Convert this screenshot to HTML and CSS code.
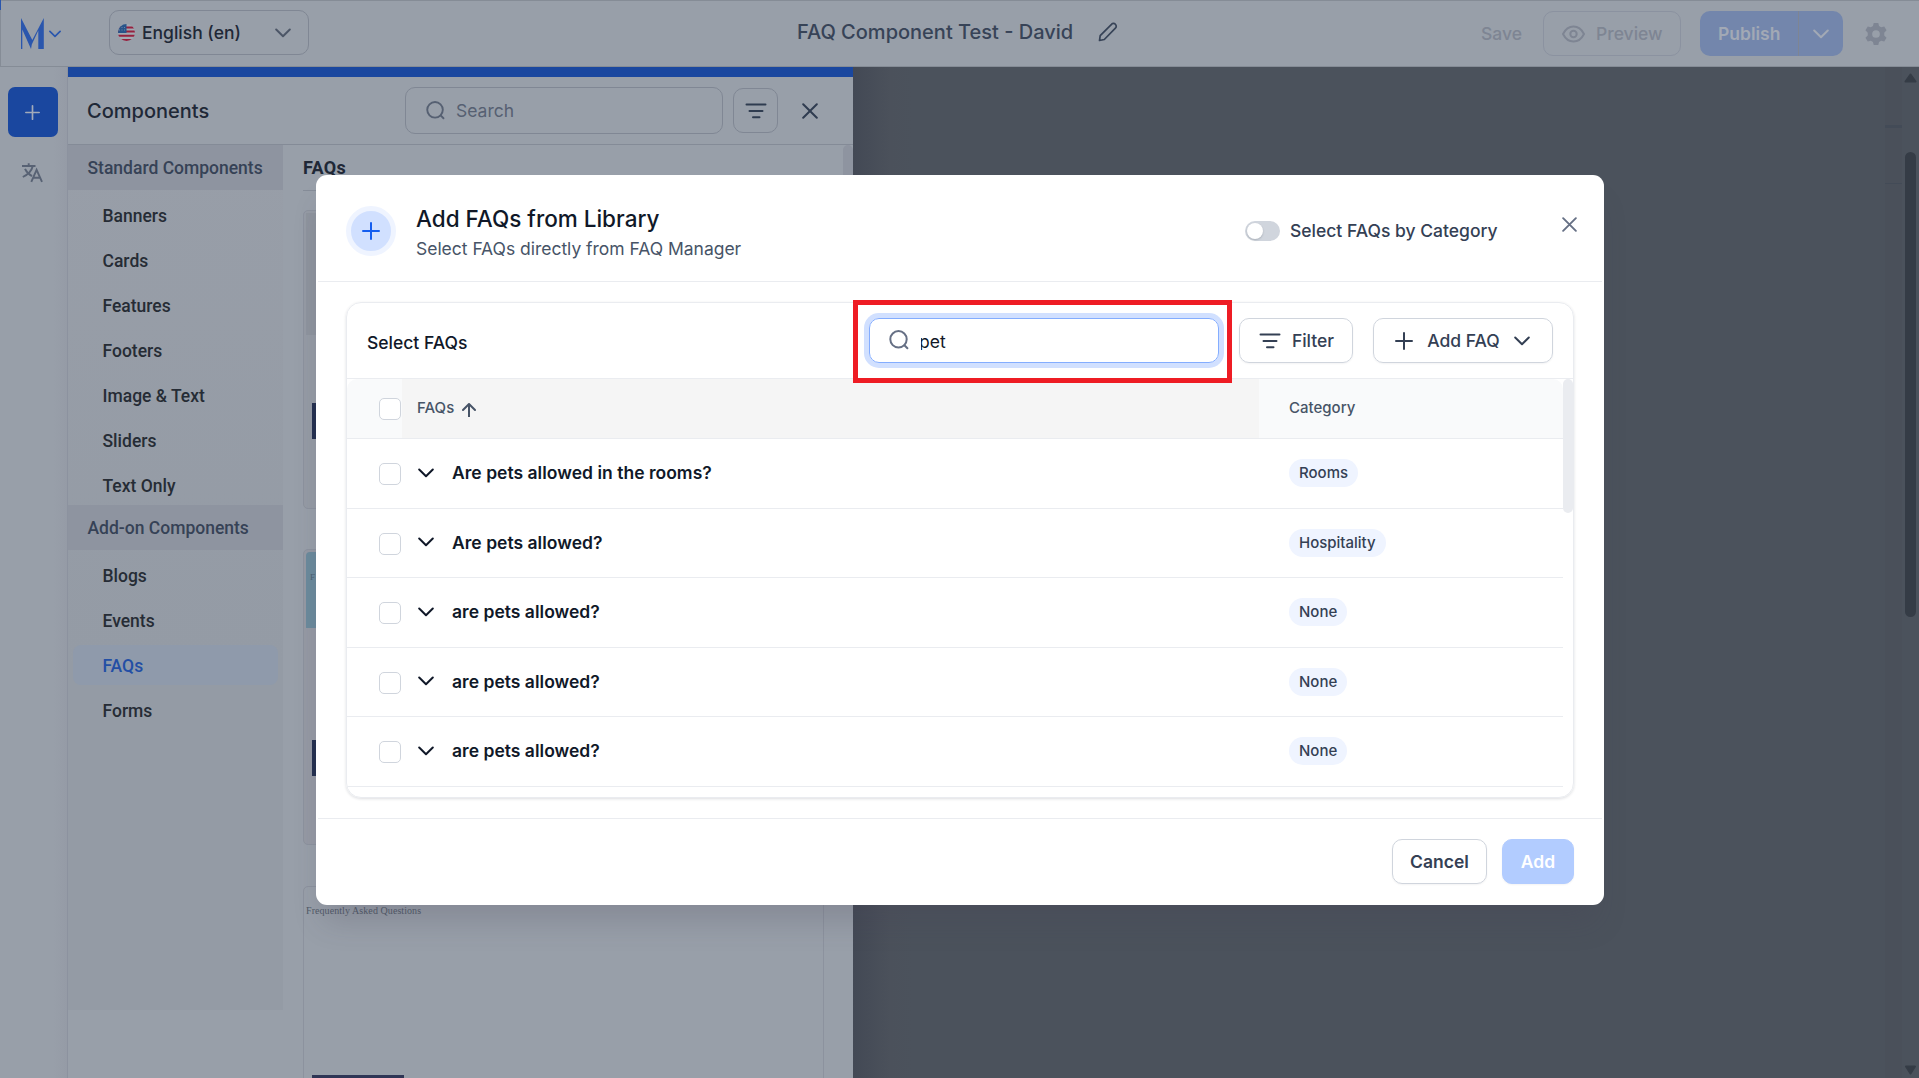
FILE: index.html
```html
<!DOCTYPE html>
<html lang="en">
<head>
<meta charset="utf-8">
<title>FAQ Component Test - David</title>
<link rel="stylesheet" href="styles.css">
</head>
<body>
<svg class="defs" width="0" height="0">
  <symbol id="chevron" viewBox="0 0 16 10"><path d="M1.2 1.5 8 8.2l6.8-6.7"/></symbol>
  <symbol id="plus" viewBox="0 0 18 18"><path d="M9 1v16M1 9h16"/></symbol>
  <symbol id="search" viewBox="0 0 20 20"><circle cx="9.5" cy="9.3" r="8.2"/><path d="m15.4 15.2 3 3"/></symbol>
  <symbol id="lines" viewBox="0 0 22 16"><path d="M1.5 1.5h19M4.5 8h13M8 14.3h6.5"/></symbol>
  <symbol id="close" viewBox="0 0 16 16"><path d="m1.2 1.2 13.6 13.6M14.8 1.2 1.2 14.8"/></symbol>
</svg>
<div class="app">
  <header class="topbar">
    <div class="brand">
      <svg width="24" height="32" viewBox="0 0 24 32"><path fill="#2a56ad" d="M0 0 11.3 22 22.8 0V31H17.3V12.5L10.8 26.5 10 31 1.3 11.5V31H0Z"/></svg>
      <svg class="ic brand-chev" width="12" height="8"><use href="#chevron"/></svg>
    </div>
    <div class="lang">
      <svg width="17" height="17" viewBox="0 0 17 17">
        <clipPath id="flag"><circle cx="8.5" cy="8.5" r="8.5"/></clipPath>
        <g clip-path="url(#flag)"><rect width="17" height="17" fill="#a3a9b3"/><path stroke="#96213f" stroke-width="2" d="M0 3.5h17M0 7.5h17M0 11.7h17M0 16h17"/><rect width="8.5" height="9" fill="#27548a"/><path stroke="#7f93ae" stroke-width=".8" stroke-dasharray="1 1.5" d="M1 3.5h7M1 6h7"/></g>
      </svg>
      <span>English (en)</span>
      <svg class="ic" width="16" height="10"><use href="#chevron"/></svg>
    </div>
    <div class="doc-title"><span>FAQ Component Test - David</span>
      <svg class="ic" width="20" height="20" viewBox="0 0 20 20"><path d="M1.5 18.5 2.2 13.6 13.5 2.3a2.6 2.6 0 0 1 3.9 0 2.6 2.6 0 0 1 0 3.8L6.3 17.5Z"/></svg>
    </div>
    <div class="actions">
      <span class="save">Save</span>
      <div class="preview">
        <svg class="ic" width="23" height="18" viewBox="0 0 23 18"><path d="M1 9C3.500 4 7 1.500 11.500 1.500S19.500 4 22 9C19.500 14 16 16.500 11.500 16.500S3.500 14 1 9Z"/><circle cx="11.500" cy="9" r="3.200"/></svg>
        <span>Preview</span>
      </div>
      <div class="publish"><span class="pub-label">Publish</span><span class="pub-more"><svg class="ic" width="16" height="10"><use href="#chevron"/></svg></span></div>
      <svg class="gear" width="22" height="22" viewBox="0 0 24 24"><path fill-rule="evenodd" d="M9.500 0h5l.8 3.400 2.300 1.300 3.400-1 2.500 4.300-2.500 2.500v3l2.500 2.500-2.500 4.300-3.400-1-2.300 1.300-.8 3.400h-5l-.8-3.400-2.300-1.300-3.400 1L.5 16 3 13.500v-3L.5 8 3 3.700l3.400 1 2.300-1.300ZM12 7.800a4.200 4.200 0 1 0 0 8.400 4.200 4.200 0 0 0 0-8.400Z"/></svg>
    </div>
    <i class="corner"></i>
  </header>
  <div class="workspace">
    <nav class="rail">
      <div class="rail-add"><svg class="ic" width="15" height="15"><use href="#plus"/></svg></div>
      <svg class="translate" width="22" height="20" viewBox="0 0 22 20"><path d="M0 3h13.500M6.700.3V3M10.800 3C9.800 7.200 6 11.500.8 14M3 5.800c1.500 3.200 4 5.600 7 7.300M9.300 18.800 14.600 6.800 20 18.800M11 14.800h7.200"/></svg>
    </nav>
    <section class="panel">
      <div class="panel-head">
        <h2>Components</h2>
        <div class="panel-search"><svg class="ic" width="19" height="19"><use href="#search"/></svg><span>Search</span></div>
        <div class="panel-filter"><svg class="ic" width="22" height="16"><use href="#lines"/></svg></div>
        <svg class="ic panel-close" width="16" height="16"><use href="#close"/></svg>
      </div>
      <div class="panel-body">
        <div class="cats">
          <h3>Standard Components</h3>
          <a>Banners</a><a>Cards</a><a>Features</a><a>Footers</a><a>Image &amp; Text</a><a>Sliders</a><a>Text Only</a>
          <h3>Add-on Components</h3>
          <a>Blogs</a><a>Events</a><a class="on">FAQs</a><a>Forms</a>
        </div>
        <div class="previews">
          <h4>FAQs</h4>
          <div class="thumb t1"><div class="hero-grey"></div><div class="navy"></div></div>
          <div class="thumb t2"><div class="hero-blue">F</div><div class="navy"></div></div>
          <div class="thumb t3"><p>Frequently Asked Questions</p><div class="navy-bar"></div></div>
        </div>
        <div class="panel-scroll"></div>
      </div>
    </section>
    <main class="canvas">
      <div class="page-edge"></div>
      <div class="scroll">
        <svg width="13" height="10" viewBox="0 0 13 10"><path stroke-width="2" stroke-linejoin="round" d="M6.500 1.500 11.500 8.500h-10Z"/></svg>
        <i></i>
        <svg width="13" height="10" viewBox="0 0 13 10"><path stroke-width="2" stroke-linejoin="round" d="M6.500 8.500 11 1.500H2Z"/></svg>
      </div>
    </main>
  </div>
</div>

<div class="overlay">
  <div class="modal">
    <div class="modal-head">
      <div class="badge"><svg class="ic" width="18" height="18"><use href="#plus"/></svg></div>
      <div class="heading"><h1>Add FAQs from Library</h1><p>Select FAQs directly from FAQ Manager</p></div>
      <div class="toggle"><i></i></div>
      <span class="toggle-label">Select FAQs by Category</span>
      <svg class="ic modal-close" width="15" height="15" viewBox="0 0 16 16"><use href="#close"/></svg>
    </div>
    <div class="modal-body">
      <div class="card">
        <div class="toolbar">
          <span class="tool-title">Select FAQs</span>
          <div class="field"><svg class="ic" width="20" height="20"><use href="#search"/></svg><span>pet</span></div>
          <div class="btn filter"><svg class="ic" width="22" height="16"><use href="#lines"/></svg>Filter</div>
          <div class="btn addfaq"><svg class="ic" width="18" height="18"><use href="#plus"/></svg><span>Add FAQ</span><svg class="ic" width="16" height="10"><use href="#chevron"/></svg></div>
        </div>
        <div class="table-wrap">
          <div class="table">
            <div class="row head">
              <div class="c-check"><i class="box"></i></div>
              <div class="c-faq">FAQs <svg class="ic" width="14" height="14" viewBox="0 0 14 14"><path d="M7 13.500V1M1 7l6-6 6 6"/></svg></div>
              <div class="c-cat">Category</div>
            </div>
            <div class="row"><div class="c-check"><i class="box"></i></div><div class="c-faq"><svg class="ic" width="16" height="10"><use href="#chevron"/></svg>Are pets allowed in the rooms?</div><div class="c-cat"><span class="pill">Rooms</span></div></div>
            <div class="row"><div class="c-check"><i class="box"></i></div><div class="c-faq"><svg class="ic" width="16" height="10"><use href="#chevron"/></svg>Are pets allowed?</div><div class="c-cat"><span class="pill">Hospitality</span></div></div>
            <div class="row"><div class="c-check"><i class="box"></i></div><div class="c-faq"><svg class="ic" width="16" height="10"><use href="#chevron"/></svg>are pets allowed?</div><div class="c-cat"><span class="pill">None</span></div></div>
            <div class="row"><div class="c-check"><i class="box"></i></div><div class="c-faq"><svg class="ic" width="16" height="10"><use href="#chevron"/></svg>are pets allowed?</div><div class="c-cat"><span class="pill">None</span></div></div>
            <div class="row"><div class="c-check"><i class="box"></i></div><div class="c-faq"><svg class="ic" width="16" height="10"><use href="#chevron"/></svg>are pets allowed?</div><div class="c-cat"><span class="pill">None</span></div></div>
          </div>
          <div class="thumb-bar"></div>
        </div>
      </div>
    </div>
    <div class="modal-foot">
      <div class="btn cancel">Cancel</div>
      <div class="btn add">Add</div>
    </div>
    <div class="marker"></div>
  </div>
</div>
</body>
</html>
```
FILE: styles.css
```css
* { box-sizing: border-box; }
html, body { height: 100%; }
body {
  margin: 0;
  overflow: hidden;
  position: relative;
  font: 500 17.5px/1.2 Inter, sans-serif;
  color: #202837;
}
h1, h2, h3, h4, p { margin: 0; font-weight: 500; }
svg { flex: none; }
.defs { position: absolute; }
.ic { fill: none; stroke: currentColor; stroke-width: 2; stroke-linecap: round; stroke-linejoin: round; }

.app { height: 100%; display: flex; flex-direction: column; background: #989fa9; }

/* Top bar */
.topbar {
  position: relative;
  flex: none;
  height: 67px;
  display: flex;
  align-items: flex-start;
  border: solid #858c96;
  border-width: 1px 0 1px 1px;
}
.corner { position: absolute; left: -1px; top: -1px; width: 1px; height: 10px; background: #2a56ad; }
.brand { display: flex; width: 108px; padding: 17px 0 0 20px; color: #2a56ad; }
.brand-chev { margin: 12px 0 0 4px; stroke-width: 2.2; }
.lang {
  width: 200px;
  height: 45px;
  margin-top: 9px;
  padding: 0 17px 0 8px;
  display: flex;
  align-items: center;
  border: 1px solid #808794;
  border-radius: 10px;
}
.lang span { flex: 1; margin-left: 7px; }
.lang .ic { color: #4c5667; }
.doc-title { display: flex; align-items: center; margin: 19px 0 0 488px; height: 24px; font-size: 20px; color: #374357; }
.doc-title .ic { margin-left: 25px; stroke-width: 1.7; }
.actions { display: flex; align-items: center; margin: 10px 42px 0 auto; height: 45px; color: #7e8593; }
.save { margin-right: 21px; }
.preview { width: 138px; height: 45px; display: flex; align-items: center; padding-left: 18px; gap: 11px; border: 1px solid #8b92a0; border-radius: 10px; }
.publish { display: flex; width: 143px; height: 45px; margin-left: 19px; background: #7386ac; border-radius: 10px; color: #a2a9b5; font-weight: 600; }
.pub-label { width: 99px; padding: 12px 0 0 18px; border-right: 1px solid #7e8593; }
.pub-more { flex: 1; display: grid; place-items: center; }
.gear { margin-left: 22px; fill: #7e8593; margin-right: -10px; }

/* Workspace */
.workspace { flex: 1; min-height: 0; display: flex; }
.rail { width: 68px; border-right: 1px solid #8c929f; padding: 20px 0 0 8px; background: linear-gradient(90deg, #989fa9 80%, #959ba6); }
.rail-add { width: 50px; height: 50px; display: grid; place-items: center; padding-right: 2px; border-radius: 7px; background: #1a479f; color: #a2abba; }
.translate { display: block; margin: 26px 0 0 14px; fill: none; stroke: #586274; stroke-width: 1.9; }

.panel { width: 785px; display: flex; flex-direction: column; border-top: 10px solid #1a479f; }
.panel-head { flex: none; height: 68px; display: flex; align-items: center; padding-left: 19px; border-bottom: 1px solid #848b97; }
.panel-head h2 { width: 318px; font-size: 20px; }
.panel-search { width: 318px; height: 47px; display: flex; align-items: center; gap: 11px; padding-left: 20px; border: 1px solid #808794; border-radius: 10px; color: #566072; font-weight: 400; }
.panel-filter { width: 45px; height: 45px; margin-left: 10px; display: grid; place-items: center; border: 1px solid #808794; border-radius: 10px; color: #2f3c50; }
.panel-close { margin-left: 24px; color: #2f3c50; }
.panel-body { flex: 1; min-height: 0; display: flex; }

.cats { width: 215px; height: 865px; background: linear-gradient(#989ea8, #949ba5 60%); font-family: Roboto, sans-serif; color: #262c35; }
.cats h3 { height: 45px; padding-left: 19.500px; font-size: 17.500px; line-height: 47px; background: #8e94a0; color: #364256; }
.cats a { display: block; height: 40px; margin: 5px 5px 0; padding-left: 29.500px; line-height: 43px; border-radius: 8px; }
.cats .on { background: #8f9aab; color: #234fa5; }

.previews { width: 560px; padding: 0 19px 0 20px; overflow: hidden; }
.previews h4 { height: 46px; padding-top: 13px; border-bottom: 1px solid #858c98; font: 700 18px/20px Roboto, sans-serif; letter-spacing: .3px; }
.thumb { border: 1px solid #8c929e; border-radius: 5px; padding: 2px; }
.t1 { height: 299px; margin-top: 19px; background: #959ba5; }
.hero-grey { height: 122px; background: #8e949e; }
.navy { margin-left: 6px; width: 300px; height: 36px; background: #232f4f; }
.t1 .navy { margin-top: 68px; }
.t2 { height: 296px; margin-top: 40px; background: #9599a4; }
.hero-blue { height: 76px; padding: 18px 0 0 4px; border-radius: 4px 4px 0 0; background: #6b8a9c; font: 9px/14px "Liberation Serif", serif; color: #4c6173; }
.t2 .navy { margin-top: 112px; }
.t3 { height: 300px; margin-top: 41px; display: flex; flex-direction: column; }
.t3 p { margin-top: 15px; font: 10px/14px "Liberation Serif", serif; letter-spacing: .07px; color: #515a68; }
.navy-bar { margin: 157px 0 0 6px; width: 92px; height: 30px; background: #2e3555; }
.panel-scroll { width: 10px; height: 600px; border-radius: 5px; background: #8e94a0; }

.canvas { flex: 1; display: flex; background: linear-gradient(90deg, #434955, #4b515b 37px, #4b525c 60px); }
.page-edge { margin-left: 1032px; width: 17px; background: linear-gradient(transparent 58px, #434b57 58px 61px, transparent 61px 116px, #434b57 116px 117px, transparent 117px), #4a505a; }
.scroll { flex: 1; display: flex; flex-direction: column; align-items: center; padding: 6px 0 3px; }
.scroll svg { fill: #353c46; stroke: #353c46; }
.scroll i { width: 11px; height: 465px; margin: 69px 0 auto; border-radius: 6px; background: #353c46; }

/* Dialog */
.overlay { position: absolute; inset: 0; display: flex; align-items: center; justify-content: center; padding: 2px 0 0 1px; }
.modal {
  position: relative;
  width: 1288px;
  height: 730px;
  display: flex;
  flex-direction: column;
  border-radius: 11px;
  background: #fff;
  box-shadow: 0 24px 30px -8px rgba(67, 62, 80, .22);
  color: #344054;
}
.modal-head { flex: none; height: 107px; margin: 0 2px; display: flex; align-items: flex-start; border-bottom: 1px solid #eaecf0; }
.badge { flex: none; width: 50px; height: 50px; margin: 31px 0 0 28px; display: grid; place-items: center; border: 5px solid #eff4ff; border-radius: 50%; background: #d1e0ff; color: #155eef; }
.heading { flex: none; width: 849px; padding: 29px 0 0 20px; }
.heading h1 { font-size: 22.5px; line-height: 30px; color: #101828; }
.heading p { margin-top: 2px; font-weight: 400; line-height: 26px; letter-spacing: -.02px; color: #475467; }
.toggle { flex: none; width: 35px; height: 20px; margin-top: 46px; padding: 2px; border-radius: 10px; background: #d0d5dd; }
.toggle i { display: block; width: 16px; height: 16px; border-radius: 50%; background: #fff; box-shadow: 0 1px 2px rgba(16, 24, 40, .2); }
.toggle-label { flex: none; width: 262px; margin: 45px 0 0 10px; }
.modal-close { margin: 42px 0 0 10px; color: #667085; }
.modal-body { flex: 1; min-height: 0; padding: 20px 30px 20px; }
.card { height: 496px; display: flex; flex-direction: column; border: 1px solid #eaecf0; border-radius: 15px; box-shadow: 0 1px 3px rgba(16, 24, 40, .14); overflow: hidden; }
.toolbar { flex: none; height: 75px; display: flex; padding: 15px 0 0 20px; }
.tool-title { width: 502px; padding-top: 14px; color: #101828; }
.field { width: 350px; height: 45px; display: flex; align-items: center; padding-left: 19px; border: 1px solid #84adff; border-radius: 10px; box-shadow: 0 0 0 5px #d1e0ff; color: #667085; }
.field .ic { margin-top: -1px; }
.field span { height: 18px; margin: 1px 0 0 12px; overflow: hidden; text-indent: -2px; line-height: 20px; font-weight: 400; color: #101828; }
.btn { display: flex; align-items: center; justify-content: center; height: 45px; border: 1px solid #d0d5dd; border-radius: 10px; box-shadow: 0 1px 2px rgba(16, 24, 40, .05); }
.filter { width: 114px; margin-left: 20px; gap: 11px; padding-left: 1px; }
.addfaq { width: 180px; margin-left: 20px; gap: 14px; padding-right: 1px; }
.table-wrap { flex: 1; display: flex; border-top: 1px solid #eaecf0; }
.table { width: 1216px; }
.row { display: flex; height: 69.5px; border-bottom: 1px solid #eaecf0; }
.c-check { width: 55px; padding: 24px 0 0 32px; }
.box { display: block; width: 22px; height: 22px; border: 1px solid #d0d5dd; border-radius: 5px; background: #fff; }
.c-faq { width: 857px; display: flex; align-items: center; padding: 0 0 1px 16px; font-weight: 600; letter-spacing: .02px; color: #101828; }
.c-faq .ic { margin-right: 18px; }
.c-cat { flex: 1; display: flex; align-items: center; padding-left: 30px; font-size: 15px; }
.pill { height: 28px; padding: 0 10px; line-height: 27px; border-radius: 14px; background: #eff4ff; }
.head { height: 60px; background: #f9fafb; border-radius: 10px 10px 0 0; font-size: 15px; }
.head .c-check { padding-top: 19px; }
.head .c-faq { padding: 0 0 2px 15px; background: #f5f5f5; font-weight: 500; color: #475467; }
.head .c-faq .ic { margin: 4px 0 0 8px; }
.head .c-cat { padding-bottom: 2px; color: #475467; }
.thumb-bar { width: 10px; height: 134px; border-radius: 5px; background: #eaecf0; }
.modal-foot { flex: none; height: 87px; margin: 0 2px; display: flex; justify-content: flex-end; gap: 15px; padding: 20px 28px 0; border-top: 1px solid #eaecf0; font-weight: 600; }
.cancel { width: 95px; }
.add { width: 72px; border-color: #b2ccff; background: #b2ccff; color: #fff; }
/* Callout frame round the search field */
.marker { position: absolute; left: 537px; top: 125px; width: 379px; height: 83px; border: 5px solid #ee1c24; }
```
